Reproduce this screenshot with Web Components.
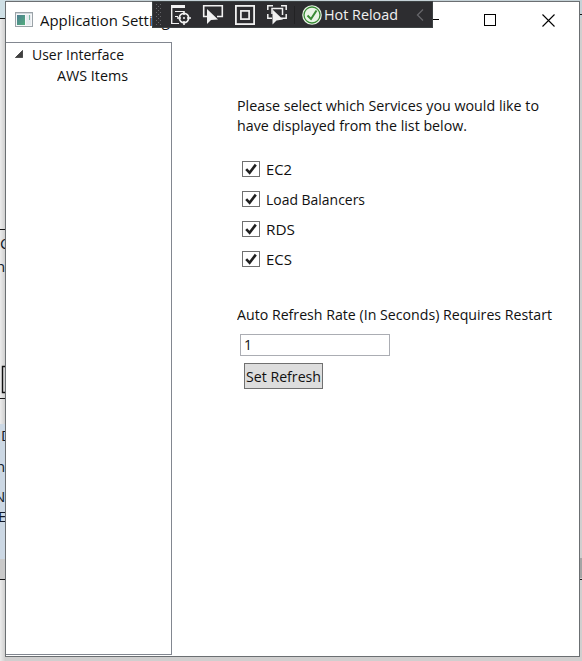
<!DOCTYPE html>
<html lang="en"><head><meta charset="utf-8"><title>Application Settings</title>
<style>html,body{margin:0;height:100%;overflow:hidden;background:#e6e6e6}</style></head>
<body>
<settings-desktop></settings-desktop>
<script>
const def=(name,html,after)=>customElements.define(name,class extends HTMLElement{
  constructor(){super();this.attachShadow({mode:'open'}).innerHTML=html;}
  connectedCallback(){if(after)after.call(this);}
});

/* One line of text condensed or widened to a given width. */
def('fit-text',`<style>:host{display:block;white-space:pre;height:20px;line-height:20px;overflow:visible}
span{display:inline-block;transform-origin:0 50%}</style><span><slot></slot></span>`,function(){
  const w=+this.getAttribute('w');this.style.width=w+'px';
  const s=this.shadowRoot.querySelector('span');
  const fit=()=>{s.style.transform='none';const n=s.getBoundingClientRect().width;if(n)s.style.transform='scaleX('+w/n+')';};
  fit();requestAnimationFrame(fit);
});

def('check-item',`<style>:host{display:flex;align-items:center;height:30px;gap:6px}
svg{display:block;flex:none}</style>
<svg width="18" height="16" viewBox="0 0 18 16"><rect x=".5" y=".5" width="17" height="15" fill="#fff" stroke="#707070"/><path d="M4.2 8.2 7.6 11.8 13.8 3.6" fill="none" stroke="#212121" stroke-width="2.6"/></svg><slot></slot>`);

def('tree-view',`<style>:host{box-sizing:border-box;display:flex;flex-direction:column;width:166px;height:613px;border:1px solid #828790;border-left:0;background:#fff}
.r{display:flex;height:21px;align-items:center;margin-top:0}.r fit-text{margin-top:1px}.a{padding-left:9px}.b{padding-left:51px}.a svg{margin-right:9px}</style>
<div class="r a"><svg width="8" height="8"><path d="M7.6 .4V7.6H.4Z" fill="#404040" stroke="#262626" stroke-width=".7"/></svg><fit-text w="92">User Interface</fit-text></div>
<div class="r b"><fit-text w="71">AWS Items</fit-text></div>`);

def('title-bar',`<style>:host{display:flex;height:40px;align-items:center;box-sizing:border-box;padding:0 24px 4px 9px}
.g{flex:1}svg{display:block}.i{margin-right:7px}.m{margin-right:45px}.q{margin-right:46px}.x{margin-right:0}</style>
<svg class="i" width="18" height="16" viewBox="0 0 18 16"><rect x=".5" y=".5" width="17" height="14" fill="#f5f7f8" stroke="#9ba3a8"/><path d="M1 1.5H17" stroke="#d0d7dc"/><rect x="2" y="3" width="8" height="10" fill="url(#g)"/><path d="M11 3H16V13H11Z" fill="#e6ebef"/><path d="M14.5 3V8" stroke="#7db6a3"/><defs><linearGradient id="g" x2="1" y2="1"><stop stop-color="#4d7e91"/><stop offset="1" stop-color="#52ad7d"/></linearGradient></defs></svg>
<fit-text w="137">Application Settings</fit-text><span class="g"></span>
<svg class="m" width="12" height="12"><path d="M0 5.5H12" stroke="#000"/></svg>
<svg class="q" width="12" height="12"><rect x=".5" y=".5" width="11" height="11" fill="none" stroke="#000"/></svg>
<svg class="x" width="13" height="13"><path d="M.5 .5 12.5 12.5M12.5 .5 .5 12.5" stroke="#000" stroke-width="1.1"/></svg>`);

def('refresh-form',`<style>:host{display:flex;flex-direction:column;align-items:flex-start}
.f{box-sizing:border-box;width:150px;height:22px;border:1px solid #abadb3;margin:10px 0 0 3px;padding-left:3px;background:#fff}
.f fit-text{margin-top:-1px}
button{font:inherit;color:inherit;box-sizing:border-box;width:79px;height:26px;border:1px solid #707070;background:#ddd;padding:0 0 1px 1px;margin:7px 0 0 7px;text-align:left;display:flex;align-items:center}</style>
<fit-text w="315">Auto Refresh Rate (In Seconds) Requires Restart</fit-text>
<div class="f"><fit-text w="8">1</fit-text></div>
<button><fit-text w="75">Set Refresh</fit-text></button>`);

def('service-panel',`<style>:host{display:block;padding:53px 0 0 65px}.c{padding:19px 0 30px 5px}</style>
<fit-text w="302">Please select which Services you would like to</fit-text>
<fit-text w="230">have displayed from the list below.</fit-text>
<div class="c"><check-item><fit-text w="26">EC2</fit-text></check-item>
<check-item><fit-text w="99">Load Balancers</fit-text></check-item>
<check-item><fit-text w="29">RDS</fit-text></check-item>
<check-item><fit-text w="26">ECS</fit-text></check-item></div>
<refresh-form></refresh-form>`);

def('debug-toolbar',`<style>:host{display:flex;box-sizing:border-box;width:281px;height:27px;background:#2d2d30;border:1px solid #3d4243;color:#f1f1f1}
svg{display:block;flex:none}fit-text{margin:2px 0 0 1px}</style>
<svg width="170" height="25" viewBox="153 2 170 25" fill="none" stroke="#f1f1f1">
<defs><pattern id="d" width="4" height="4" patternUnits="userSpaceOnUse"><path d="M0 0H1V1H0ZM2 2H3V3H2Z" fill="#66666a" stroke="none"/></pattern></defs>
<rect x="156" y="4" width="6" height="21" fill="url(#d)" stroke="none"/>
<path d="M171 6.5H185" stroke-width="3"/><path d="M175 11.5H184M175 16.5H178M171 23.5H179"/><path d="M171.7 6V24" stroke-width="1.4"/>
<circle cx="184" cy="18" r="4.6" stroke-width="1.8"/><path d="M184 11V15M184 21V25M177 18H181M187 18H191" stroke-width="1.6"/><circle cx="184" cy="18" r="1" fill="#f1f1f1" stroke="none"/>
<path d="M208 16.5H203.7V5.8H222.3V16.5H217" stroke-width="1.6"/>
<path d="M207 9V24L211 20 218 19.5Z" fill="#f1f1f1" stroke="none"/>
<rect x="235.9" y="5.9" width="18.2" height="18.2" stroke-width="1.8"/><rect x="240.9" y="10.9" width="8.2" height="8.2" stroke-width="1.7"/>
<path d="M267.8 10V5.8H273M281 5.8H286.2V10M267.8 14V18.2H272M286.2 14V18.2H281" stroke-width="1.5"/><path d="M272 14V8.5H282.5V15" stroke-width="1.5"/>
<path d="M272.5 9.5V24.5L276.5 20.5 283 19.5Z" fill="#f1f1f1" stroke="none"/>
<path d="M294.5 6V24" stroke="#222224"/>
<circle cx="312" cy="15" r="9.8" fill="#e9f4e6" stroke="none"/><circle cx="312" cy="15" r="8" stroke="#388a34" stroke-width="1.3"/><path d="M307.5 15.5 311 19 316.5 10.5" stroke="#388a34" stroke-width="2"/>
</svg><fit-text w="74">Hot Reload</fit-text>
<svg width="30" height="25" viewBox="398 2 30 25"><path d="M423 9.5 417.5 15 423 20.5" fill="none" stroke="#66666a" stroke-width="1.3"/></svg>`);

/* Slivers of the application visible on either side of the dialog. */
def('back-edges',`<style>:host{display:block;width:582px;height:661px}svg{display:block}text{font:15px "Open Sans",sans-serif;fill:#101828}</style>
<svg width="582" height="661"><defs><linearGradient id="s"><stop stop-color="#ececec"/><stop offset="1" stop-color="#cbcbcb"/></linearGradient></defs>
<rect width="582" height="661" fill="#d0cfcf"/><rect width="582" height="18" fill="#c5d2d7"/>
<rect width="6" height="661" fill="url(#s)"/><rect width="6" height="18" fill="#cfe0e6"/><rect y="424" width="6" height="135" fill="#ccd8e4"/><rect y="559" width="6" height="20" fill="#c9c9c9"/><rect x="579" y="558" width="3" height="20" fill="#a5a5a5"/>
<path d="M0 18.5H6M0 229.5H6M0 398.5H6M0 579.5H6M579 14.5H582M579 579.5H582" stroke="#151515"/>
<path d="M6 366.5H2.5V392.5H6" fill="none" stroke="#111" stroke-width="1.4"/>
<text x="0" y="249">C</text><text x="-4" y="272">n</text><text x="1" y="441">D</text><text x="-4" y="472">n</text><text x="-6" y="502">N</text><text x="-2" y="522">E</text></svg>`);

def('app-window',`<style>:host{display:flex;flex-direction:column;box-sizing:border-box;width:575px;height:656px;border:1px solid #6b6f72;background:#fff}
main{display:flex}</style><title-bar></title-bar><main><tree-view></tree-view><service-panel></service-panel></main>`);

def('settings-desktop',`<style>:host{display:block;position:relative;width:582px;height:661px;overflow:hidden;font:14.6px "Open Sans","Noto Sans",sans-serif;color:#111}
app-window{position:absolute;left:5px;top:1px}debug-toolbar{position:absolute;left:152px;top:1px}</style>
<back-edges></back-edges><app-window></app-window><debug-toolbar></debug-toolbar>`);
</script></body></html>
